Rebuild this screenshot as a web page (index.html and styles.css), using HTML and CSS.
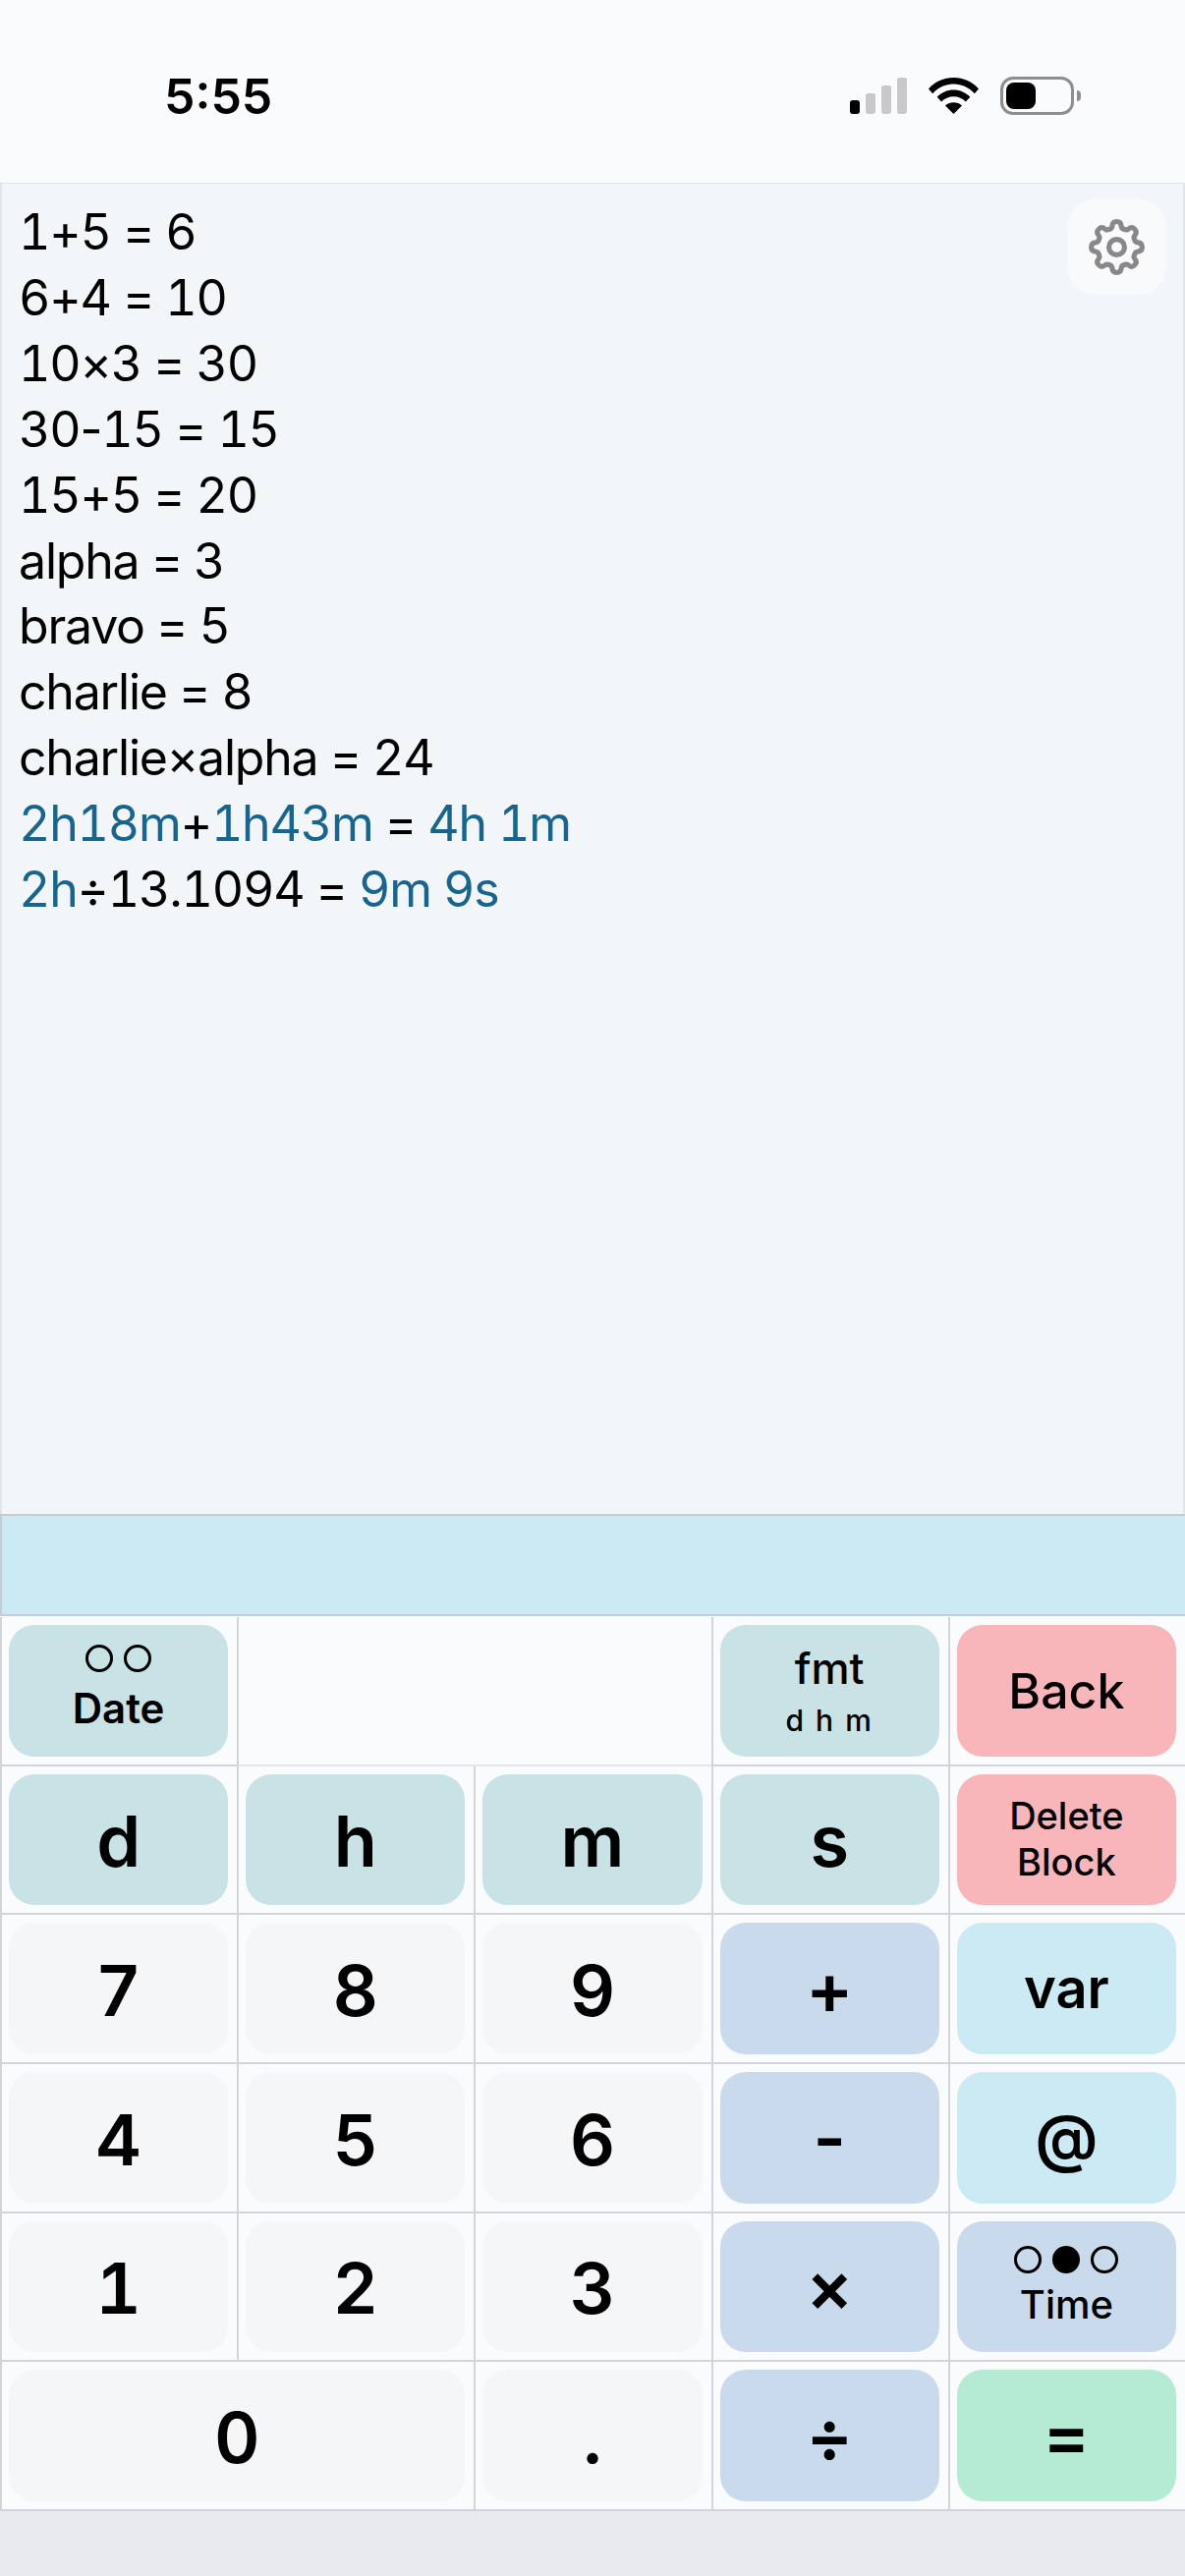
FILE: index.html
```html
<!DOCTYPE html>
<html lang="en">
<head>
<meta charset="utf-8">
<title>Calculator</title>
<link rel="stylesheet" href="styles.css">
</head>
<body>
<div class="app">
  <header class="status">
    <span class="clock">5:55</span>
    <div class="status-icons">
      <div class="signal">
        <i class="bar bar-1"></i><i class="bar bar-2"></i><i class="bar bar-3"></i><i class="bar bar-4"></i>
      </div>
      <svg class="wifi" width="51" height="37" viewBox="0 0 51 37">
        <path d="M0 11.500C6.500 4 15.500 0 25.500 0S44.500 4 51 11.500L46.800 16.200C41.300 10 33.800 6.500 25.500 6.500S9.700 10 4.200 16.200Z"/>
        <path d="M8.700 19.800C13 15.200 19 12.600 25.500 12.600S38 15.200 42.300 19.800L37.900 24.600C34.700 21.300 30.300 19.300 25.500 19.300S16.300 21.300 13.100 24.600Z"/>
        <path d="M17 28.500C19.300 26.500 22.300 25.300 25.500 25.300S31.700 26.500 34 28.500L25.500 37Z"/>
      </svg>
      <div class="battery">
        <div class="battery-body"><div class="battery-fill"></div></div>
        <div class="battery-nub"></div>
      </div>
    </div>
  </header>

  <main class="display">
    <div class="line">1+5 = 6</div>
    <div class="line">6+4 = 10</div>
    <div class="line">10×3 = 30</div>
    <div class="line">30<span class="minus">-</span>15 = 15</div>
    <div class="line">15+5 = 20</div>
    <div class="line">alpha = 3</div>
    <div class="line">bravo = 5</div>
    <div class="line">charlie = 8</div>
    <div class="line">charlie×alpha = 24</div>
    <div class="line"><span class="dur">2h18m</span>+<span class="dur">1h43m</span> = <span class="dur">4h 1m</span></div>
    <div class="line"><span class="dur">2h</span>÷13.1094 = <span class="dur">9m 9s</span></div>
    <button class="gear" aria-label="Settings">
      <svg width="59" height="59" viewBox="-28 -28 56 56">
        <defs>
          <path id="tooth" d="M-6.900 -17.400Q-4.800 -17.800 -4.400 -20Q-4.200 -24.600 0 -24.600Q4.200 -24.600 4.400 -20Q4.800 -17.800 6.900 -17.400"/>
        </defs>
        <g class="gear-line">
          <use href="#tooth"/>
          <use href="#tooth" transform="rotate(45)"/>
          <use href="#tooth" transform="rotate(90)"/>
          <use href="#tooth" transform="rotate(135)"/>
          <use href="#tooth" transform="rotate(180)"/>
          <use href="#tooth" transform="rotate(225)"/>
          <use href="#tooth" transform="rotate(270)"/>
          <use href="#tooth" transform="rotate(315)"/>
          <circle r="7.500"/>
        </g>
      </svg>
    </button>
  </main>

  <div class="entry"></div>

  <section class="keypad">
    <div class="cell"><button class="key teal date"><span class="dots"><i class="dot"></i><i class="dot"></i></span><span class="mode-label">Date</span></button></div>
    <div class="cell span-2 empty"></div>
    <div class="cell"><button class="key teal"><span class="fmt">fmt</span><span class="fmt-sub">d h m</span></button></div>
    <div class="cell"><button class="key pink word">Back</button></div>

    <div class="cell"><button class="key teal unit">d</button></div>
    <div class="cell"><button class="key teal unit">h</button></div>
    <div class="cell"><button class="key teal unit">m</button></div>
    <div class="cell"><button class="key teal unit">s</button></div>
    <div class="cell"><button class="key pink delete">Delete<br>Block</button></div>

    <div class="cell"><button class="key plain">7</button></div>
    <div class="cell"><button class="key plain">8</button></div>
    <div class="cell"><button class="key plain">9</button></div>
    <div class="cell"><button class="key blue">+</button></div>
    <div class="cell"><button class="key sky var">var</button></div>

    <div class="cell"><button class="key plain">4</button></div>
    <div class="cell"><button class="key plain">5</button></div>
    <div class="cell"><button class="key plain">6</button></div>
    <div class="cell"><button class="key blue">-</button></div>
    <div class="cell"><button class="key sky at">@</button></div>

    <div class="cell"><button class="key plain">1</button></div>
    <div class="cell"><button class="key plain">2</button></div>
    <div class="cell"><button class="key plain">3</button></div>
    <div class="cell"><button class="key blue">×</button></div>
    <div class="cell"><button class="key blue time"><span class="dots"><i class="dot"></i><i class="dot on"></i><i class="dot"></i></span><span class="mode-label">Time</span></button></div>

    <div class="cell span-2"><button class="key plain">0</button></div>
    <div class="cell"><button class="key plain">.</button></div>
    <div class="cell"><button class="key blue">÷</button></div>
    <div class="cell"><button class="key green">=</button></div>
  </section>

  <div class="home-area"></div>
</div>
</body>
</html>
```

FILE: styles.css
```css
* { box-sizing: border-box; }

html, body { margin: 0; padding: 0; }

body {
  font-family: Inter, "Noto Sans", sans-serif;
  color: #000;
  background: #e9eaee;
}

.app {
  display: flex;
  flex-direction: column;
  height: 2622px;
  width: 1206px;
  overflow: hidden;
}

/* status bar */
.status {
  flex: 0 0 187px;
  display: flex;
  justify-content: space-between;
  align-items: flex-start;
  background: #fafbfd;
  border-bottom: 1px solid #dfe2e6;
  padding: 68px 106px 0 167px;
}

.clock {
  font-size: 50px;
  font-weight: 600;
  line-height: 61px;
}

.status-icons {
  display: flex;
  align-items: flex-end;
  gap: 22px;
  padding-top: 10px;
}

.signal {
  display: flex;
  align-items: flex-end;
  gap: 6px;
  height: 37px;
}

.bar {
  display: block;
  width: 10px;
  border-radius: 3px;
  background: #c8c8ca;
}
.bar-1 { height: 14px; background: #000; }
.bar-2 { height: 21px; }
.bar-3 { height: 29px; }
.bar-4 { height: 37px; }

.wifi { display: block; fill: #000; }

.battery {
  display: flex;
  align-items: center;
  gap: 3px;
  margin-bottom: -1px;
}

.battery-body {
  width: 75px;
  height: 39px;
  border: 3px solid #8e8e8e;
  border-radius: 13px;
  padding: 3px;
}

.battery-fill {
  width: 30px;
  height: 100%;
  background: #000;
  border-radius: 8px;
}

.battery-nub {
  width: 4px;
  height: 11px;
  background: #8e8e8e;
  border-radius: 0 5px 5px 0;
}

/* history display */
.display {
  position: relative;
  flex: 1 1 auto;
  background: #f3f6f9;
  border-left: 2px solid #e1e4e8;
  border-right: 2px solid #e1e4e8;
  padding: 16px 0 0 17px;
  font-size: 50px;
  line-height: 66.9px;
  letter-spacing: -1.2px;
  font-variant-numeric: tabular-nums;
}

.line { white-space: nowrap; }

.minus { font-variant-numeric: normal; }

.dur { color: #17658f; }

.gear {
  position: absolute;
  top: 16px;
  right: 17px;
  width: 101px;
  height: 97px;
  padding: 0;
  border: 0;
  border-radius: 28px;
  background: #f9fafb;
  display: flex;
  align-items: center;
  justify-content: center;
}

.gear-line {
  fill: none;
  stroke: #888;
  stroke-width: 4.800;
  stroke-linecap: round;
  stroke-linejoin: round;
}

/* entry band */
.entry {
  flex: 0 0 104px;
  background: #cceaf3;
  border-style: solid;
  border-color: #c3cdd3;
  border-width: 2px 0 2px 2px;
}

/* keypad */
.keypad {
  flex: 0 0 911px;
  display: grid;
  grid-template-columns: repeat(5, 1fr);
  grid-template-rows: repeat(6, 1fr);
  padding-top: 1px;
  background: #fafbfd;
}

.cell {
  display: flex;
  min-width: 0;
  min-height: 0;
  padding: 8px 9px 8px 7px;
  border-left: 2px solid #d3d4d9;
  border-bottom: 2px solid #d3d4d9;
}

.span-2 { grid-column: span 2; }

.empty { border-bottom-color: #e6e7eb; }

.key {
  flex: 1 1 auto;
  min-width: 0;
  display: flex;
  flex-direction: column;
  align-items: center;
  justify-content: center;
  padding: 0;
  border: 0;
  border-radius: 26px;
  background: #f5f6f8;
  color: #000;
  font-family: inherit;
  font-size: 72px;
  font-weight: 600;
  line-height: 1;
  font-variant-numeric: tabular-nums;
}

.plain { padding-top: 4px; }

.teal { background: #c8e2e5; }
.pink { background: #f8b6bb; }
.blue { background: #c8daeb; }
.sky { background: #cceaf3; }
.green { background: #b5ebd2; }

.unit { padding-top: 3px; }
.word { font-size: 50px; padding-top: 1px; font-weight: 500; }
.var { font-size: 56px; }
.at { font-size: 64px; }

.delete {
  font-size: 38px;
  line-height: 47px;
  font-weight: 500;
}

.dots {
  display: flex;
  gap: 11px;
  margin-bottom: 9px;
}

.date { padding-bottom: 5px; }
.date .dots { margin-bottom: 14px; }

.dot {
  display: block;
  width: 28px;
  height: 28px;
  border: 3px solid #000;
  border-radius: 50%;
}
.dot.on { background: #000; }

.mode-label {
  font-size: 42px;
  line-height: 46px;
}

.time .mode-label {
  font-size: 40px;
  font-weight: 500;
}

.fmt {
  font-size: 44px;
  line-height: 54px;
  margin-top: -2px;
  font-weight: 500;
}

.fmt-sub {
  font-size: 30px;
  line-height: 36px;
  letter-spacing: 2px;
  margin-top: 8px;
  font-weight: 500;
}

.home-area {
  flex: 0 0 66px;
  background: #e9eaee;
}
```
